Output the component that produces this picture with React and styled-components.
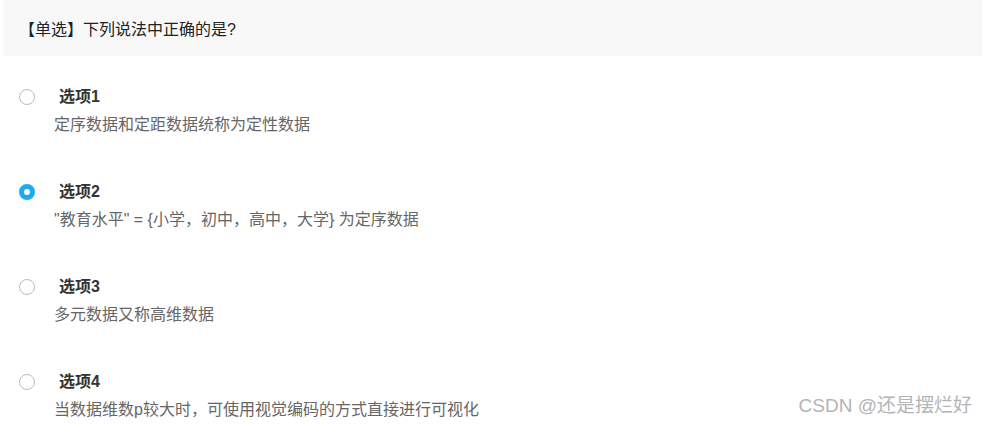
import styled, { createGlobalStyle } from 'styled-components'

const GlobalStyle = createGlobalStyle`
    html, body {
        margin: 0;
        padding: 0;
        background: #fff;
    }
    body {
        font-family: "Liberation Sans", "Noto Sans CJK SC", sans-serif;
    }
`;

const Page = styled.div`
    position: relative;
    width: 987px;
    height: 424px;
    overflow: hidden;
    padding: 0 5px 0 3px;
    box-sizing: border-box;
`;

const QuestionTitle = styled.div`
    height: 56px;
    background: #f8f8f8;
    display: flex;
    align-items: center;
    padding-left: 16px;
    font-size: 16px;
    color: #222;
`;

const OptionList = styled.div`
    padding: 31px 0 0 16px;
    display: flex;
    flex-direction: column;
    gap: 47px;
`;

const Option = styled.div`
    display: flex;
    flex-direction: column;
    gap: 8px;
`;

const OptionHead = styled.div`
    display: flex;
    align-items: center;
    height: 20px;
`;

const Radio = styled.span`
    width: 16px;
    height: 16px;
    border-radius: 50%;
    box-sizing: border-box;
    border: ${p => (p.checked ? '5px solid #1eaaf1' : '1px solid #bdbdbd')};
    background: #fff;
    margin-right: 19px;
    flex-shrink: 0;
`;

const OptionLabel = styled.span`
    padding-left: 5px;
    font-size: 16px;
    font-weight: bold;
    color: #333;
    line-height: 20px;
`;

const OptionText = styled.div`
    margin-left: 35px;
    font-size: 16px;
    line-height: 20px;
    color: #666;
`;

const Watermark = styled.div`
    position: absolute;
    right: 15px;
    bottom: 7px;
    font-size: 19px;
    color: #b4b4b4;
    text-shadow: 0 0 1px #fff;
`;

const options = [
    { label: '选项1', text: '定序数据和定距数据统称为定性数据' },
    { label: '选项2', text: '"教育水平" = {小学，初中，高中，大学} 为定序数据', checked: true },
    { label: '选项3', text: '多元数据又称高维数据' },
    { label: '选项4', text: '当数据维数p较大时，可使用视觉编码的方式直接进行可视化' },
];

const App = () => (
    <Page>
        <GlobalStyle />
        <QuestionTitle>【单选】下列说法中正确的是?</QuestionTitle>
        <OptionList>
            {options.map(o => (
                <Option key={o.label}>
                    <OptionHead>
                        <Radio checked={o.checked} />
                        <OptionLabel>{o.label}</OptionLabel>
                    </OptionHead>
                    <OptionText>{o.text}</OptionText>
                </Option>
            ))}
        </OptionList>
        <Watermark>CSDN @还是摆烂好</Watermark>
    </Page>
);

export default App;
